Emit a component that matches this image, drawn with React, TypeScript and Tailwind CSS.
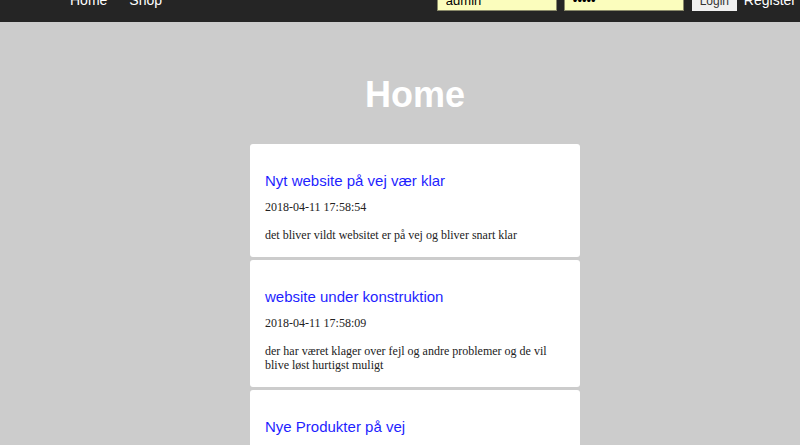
export default function App() {
  const posts = [
    { title: "Nyt website på vej vær klar", date: "2018-04-11 17:58:54", body: "det bliver vildt websitet er på vej og bliver snart klar" },
    { title: "website under konstruktion", date: "2018-04-11 17:58:09", body: "der har været klager over fejl og andre problemer og de vil blive løst hurtigst muligt" },
    { title: "Nye Produkter på vej", date: "2018-04-11 17:57:30", body: "nye produkter kommer snart i shoppen" },
  ];
  return (
    <div className="w-[800px] h-[445px] overflow-hidden bg-[#cccccc]" style={{ fontFamily: '"Liberation Sans", Arial, sans-serif' }}>
      <div className="h-[22px] overflow-hidden bg-[#252525]">
        <div className="flex items-start mt-[-10px] h-[32px]">
          <a className="ml-[70px] text-white text-[14px] leading-[16px] mt-[2px]">Home</a>
          <a className="ml-[22px] text-white text-[14px] leading-[16px] mt-[2px]">Shop</a>
          <div className="ml-auto flex items-start">
            <input readOnly value="admin" className="w-[120px] h-[21px] bg-[#fbfdbd] border border-[#8a8a6a] text-[13px] px-[8px] text-black" />
            <input readOnly type="password" value="admin" className="ml-[7px] w-[120px] h-[21px] bg-[#fbfdbd] border border-[#8a8a6a] text-[13px] px-[8px] text-black" />
            <button className="ml-[8px] w-[45px] h-[21px] bg-[#f0f0f0] text-[12px] text-[#333]">Login</button>
            <a className="ml-[7px] mr-[4px] text-white text-[14px] leading-[16px] mt-[2px]">Register</a>
          </div>
        </div>
      </div>
      <h1 className="text-white font-bold text-[36px] leading-[42px] text-center pl-[30px] mt-[52px]">Home</h1>
      <div className="ml-[250px] w-[330px] mt-[28px] flex flex-col gap-[3px]">
        {posts.map((p) => (
          <div key={p.date} className="bg-white rounded-[3px] px-[15px] pt-[28px] pb-[15px]">
            <h3 className="text-[#1f1fff] text-[15px] leading-[17px]">{p.title}</h3>
            <p className="mt-[11px] text-[12px] leading-[14px] text-[#222]" style={{ fontFamily: '"Liberation Serif", "Times New Roman", serif' }}>{p.date}</p>
            <p className="mt-[14px] text-[12px] leading-[14px] text-[#222]" style={{ fontFamily: '"Liberation Serif", "Times New Roman", serif' }}>{p.body}</p>
          </div>
        ))}
      </div>
    </div>
  );
}
